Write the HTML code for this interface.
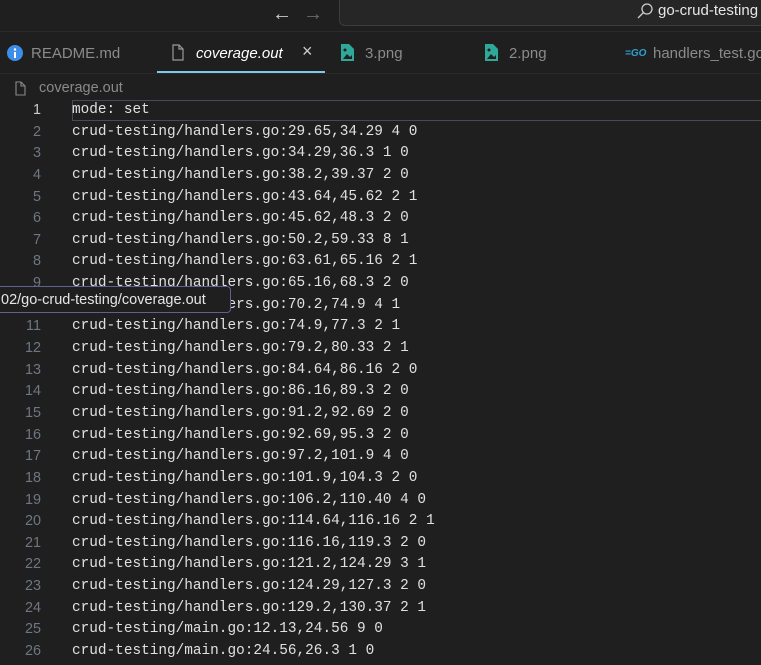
<!DOCTYPE html>
<html><head><style>
body{margin:0;width:761px;height:665px;background:#1f1f1f;overflow:hidden;position:relative;font-family:"Liberation Sans",sans-serif}
.top{position:absolute;left:0;top:0;width:761px;height:31px;background:#1f1f1f;border-bottom:1px solid #2b2b2b}
.search{position:absolute;left:339px;top:-6px;width:440px;height:30px;border:1px solid #3c3c3c;border-radius:6px;background:#262626}
.tabs{position:absolute;left:0;top:32px;width:761px;height:41px;background:#1f1f1f}
.tab{position:absolute;top:13px;font-size:15px;color:#8b8b8b}
.code{position:absolute;left:0;top:102px;font-family:"Liberation Mono",monospace;font-size:14.4px;color:#e0e0e0}
.ln{position:absolute;width:41px;text-align:right;color:#6e7681;font-size:14.4px}
.tx{position:absolute;left:72px;white-space:pre}
</style></head><body>
<div class="top">
 <div style="position:absolute;left:272px;top:3px;color:#cccccc;font-size:20px">&#8592;</div>
 <div style="position:absolute;left:303px;top:3px;color:#6a6a6a;font-size:20px">&#8594;</div>
 <div class="search"></div>
 <svg style="position:absolute;left:636px;top:1px" width="18" height="20"><circle cx="11" cy="8" r="5" fill="none" stroke="#ccc" stroke-width="1.3"/><line x1="7.5" y1="11.5" x2="2" y2="17" stroke="#ccc" stroke-width="1.3"/></svg>
 <div style="position:absolute;left:658px;top:2px;color:#e6e6e6;font-size:15px">go-crud-testing</div>
</div>
<div class="tabs">
 <svg style="position:absolute;left:7px;top:13px" width="16" height="16"><circle cx="8" cy="8" r="8" fill="#3c8ee8"/><rect x="7" y="7" width="2" height="6" fill="#fff"/><circle cx="8" cy="4.5" r="1.2" fill="#fff"/></svg>
 <div class="tab" style="left:31px">README.md</div>
 <svg style="position:absolute;left:172px;top:12px" width="12" height="17"><path d="M1 1h6l4 4v11H1z M7 1v4h4" fill="none" stroke="#9a9a9a" stroke-width="1.2"/></svg>
 <div class="tab" style="left:196px;color:#fff;font-style:italic">coverage.out</div>
 <div class="tab" style="left:302px;top:9px;color:#ccc;font-size:18px">&#215;</div>
 <div style="position:absolute;left:157px;top:39px;width:168px;height:2px;background:#7ec9e8"></div>
 <svg style="position:absolute;left:341px;top:12px" width="13" height="17"><path d="M0 0h8l5 5v12H0z" fill="#2fa89a"/><path d="M2 15l4-5 3 3 2-2v4z" fill="#1f1f1f"/><circle cx="4" cy="6" r="1.5" fill="#1f1f1f"/></svg>
 <div class="tab" style="left:365px">3.png</div>
 <svg style="position:absolute;left:485px;top:12px" width="13" height="17"><path d="M0 0h8l5 5v12H0z" fill="#2fa89a"/><path d="M2 15l4-5 3 3 2-2v4z" fill="#1f1f1f"/><circle cx="4" cy="6" r="1.5" fill="#1f1f1f"/></svg>
 <div class="tab" style="left:509px">2.png</div>
 <div style="position:absolute;left:625px;top:16px;color:#2f9fd0;font-size:10px;font-weight:bold;font-style:italic">=GO</div>
 <div class="tab" style="left:653px">handlers_test.go</div>
</div>
<div style="position:absolute;left:0;top:73px;width:761px;height:1px;background:#2a2a2a"></div>
<svg style="position:absolute;left:15px;top:81px" width="11" height="15"><path d="M1 1h5l4 4v9H1z M6 1v4h4" fill="none" stroke="#8a8a8a" stroke-width="1.1"/></svg>
<div style="position:absolute;left:39px;top:80px;font-size:14.5px;color:#8a8a8a">coverage.out</div>
<div style="position:absolute;left:72px;top:100px;width:700px;height:21px;border:1px solid #4a485c;box-sizing:border-box"></div>
<div class="code" id="c"></div>
<div style="position:absolute;left:-10px;top:286px;width:241px;height:27px;background:#1f1f1f;border:1px solid #5f6290;border-radius:4px;box-sizing:border-box;color:#e6e6e6;font-size:14.5px;padding:5px 0 0 10px">02/go-crud-testing/coverage.out</div>
<script>
var L=["mode: set","crud-testing/handlers.go:29.65,34.29 4 0","crud-testing/handlers.go:34.29,36.3 1 0","crud-testing/handlers.go:38.2,39.37 2 0","crud-testing/handlers.go:43.64,45.62 2 1","crud-testing/handlers.go:45.62,48.3 2 0","crud-testing/handlers.go:50.2,59.33 8 1","crud-testing/handlers.go:63.61,65.16 2 1","crud-testing/handlers.go:65.16,68.3 2 0","crud-testing/handlers.go:70.2,74.9 4 1","crud-testing/handlers.go:74.9,77.3 2 1","crud-testing/handlers.go:79.2,80.33 2 1","crud-testing/handlers.go:84.64,86.16 2 0","crud-testing/handlers.go:86.16,89.3 2 0","crud-testing/handlers.go:91.2,92.69 2 0","crud-testing/handlers.go:92.69,95.3 2 0","crud-testing/handlers.go:97.2,101.9 4 0","crud-testing/handlers.go:101.9,104.3 2 0","crud-testing/handlers.go:106.2,110.40 4 0","crud-testing/handlers.go:114.64,116.16 2 1","crud-testing/handlers.go:116.16,119.3 2 0","crud-testing/handlers.go:121.2,124.29 3 1","crud-testing/handlers.go:124.29,127.3 2 0","crud-testing/handlers.go:129.2,130.37 2 1","crud-testing/main.go:12.13,24.56 9 0","crud-testing/main.go:24.56,26.3 1 0"];
var h="";for(var i=0;i<L.length;i++){var t=i*21.64;h+='<div class="ln" style="top:'+t+'px;font-family:\'Liberation Sans\',sans-serif;'+(i==0?'color:#ccc':'')+'">'+(i+1)+'</div><div class="tx" style="top:'+t+'px">'+L[i]+'</div>';}
document.getElementById("c").innerHTML=h;
</script>
</body></html>
